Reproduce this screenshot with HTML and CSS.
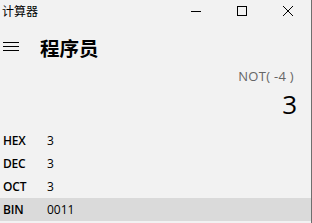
FILE: index.html
```html
<!DOCTYPE html>
<html lang="zh">

<head>
  <meta charset="UTF-8" />
  <title>计算器</title>
  <link rel="stylesheet" href="styles.css">
</head>

<body>
  <main class="window">
    <header class="titlebar">
      <span class="titlebar-title">计算器</span>
      <div class="titlebar-buttons">
        <span class="titlebar-btn">
          <svg width="12" height="12" viewBox="0 0 12 12"><path d="M1 6.5h10" stroke="#000" stroke-width="1" /></svg>
        </span>
        <span class="titlebar-btn">
          <svg width="12" height="12" viewBox="0 0 12 12"><rect x="1.5" y="1.5" width="9" height="9" fill="none" stroke="#000" stroke-width="1" /></svg>
        </span>
        <span class="titlebar-btn">
          <svg width="12" height="12" viewBox="0 0 12 12"><path d="M1 1l10 10M11 1L1 11" stroke="#000" stroke-width="1" /></svg>
        </span>
      </div>
    </header>

    <section class="mode">
      <svg class="mode-menu" width="16" height="10" viewBox="0 0 16 10">
        <path d="M0 0.5h16M0 4.5h16M0 8.5h16" stroke="#000" stroke-width="1" />
      </svg>
      <h1 class="mode-name">程序员</h1>
    </section>

    <section class="display">
      <div class="display-expr">NOT( -4 )</div>
      <div class="display-value">3</div>
    </section>

    <ul class="radix">
      <li class="radix-row"><span class="radix-label">HEX</span><span class="radix-value">3</span></li>
      <li class="radix-row"><span class="radix-label">DEC</span><span class="radix-value">3</span></li>
      <li class="radix-row"><span class="radix-label">OCT</span><span class="radix-value">3</span></li>
      <li class="radix-row radix-row-active"><span class="radix-label">BIN</span><span class="radix-value">0011</span></li>
    </ul>
  </main>
</body>
</html>
```

FILE: styles.css
```css
html,
body {
  margin: 0;
  padding: 0;
}

body {
  background: #f2f2f2;
  font-family: "Open Sans", "Noto Sans CJK SC", sans-serif;
  color: #000;
}

.window {
  box-sizing: border-box;
  width: 312px;
  height: 223px;
  border-right: 1px solid #6e6e6e;
  overflow: hidden;
}

.titlebar {
  display: flex;
  justify-content: space-between;
  height: 32px;
}

.titlebar-title {
  padding: 3px 0 0 2px;
  font-family: "Noto Sans CJK SC", sans-serif;
  font-size: 12px;
  line-height: 16px;
}

.titlebar-buttons {
  display: flex;
}

.titlebar-btn {
  display: flex;
  justify-content: center;
  width: 46px;
  padding-top: 5px;
}

.mode {
  display: flex;
  align-items: center;
  height: 30px;
}

.mode-menu {
  margin: 0 21px 0 3px;
}

.mode-name {
  margin: 0;
  font-family: "Noto Sans CJK SC", sans-serif;
  font-size: 19.5px;
  font-weight: 700;
}

.display {
  padding: 5px 14px 0 0;
  text-align: right;
  height: 62px;
  box-sizing: border-box;
}

.display-expr {
  padding-right: 3px;
  font-size: 13px;
  line-height: 18px;
  color: #666;
  letter-spacing: 0.3px;
  white-space: pre;
}

.display-value {
  margin-top: 5px;
  font-size: 26px;
  line-height: 28px;
  font-weight: 500;
}

.radix {
  list-style: none;
  margin: 5px 0 0;
  padding: 0;
}

.radix-row {
  display: flex;
  align-items: center;
  height: 23px;
  font-size: 12px;
}

.radix-row-active {
  background: #dadada;
}

.radix-label {
  width: 44px;
  padding-left: 3px;
  font-weight: 600;
  letter-spacing: -0.2px;
}

.radix-value {
  font-weight: 500;
}
```
